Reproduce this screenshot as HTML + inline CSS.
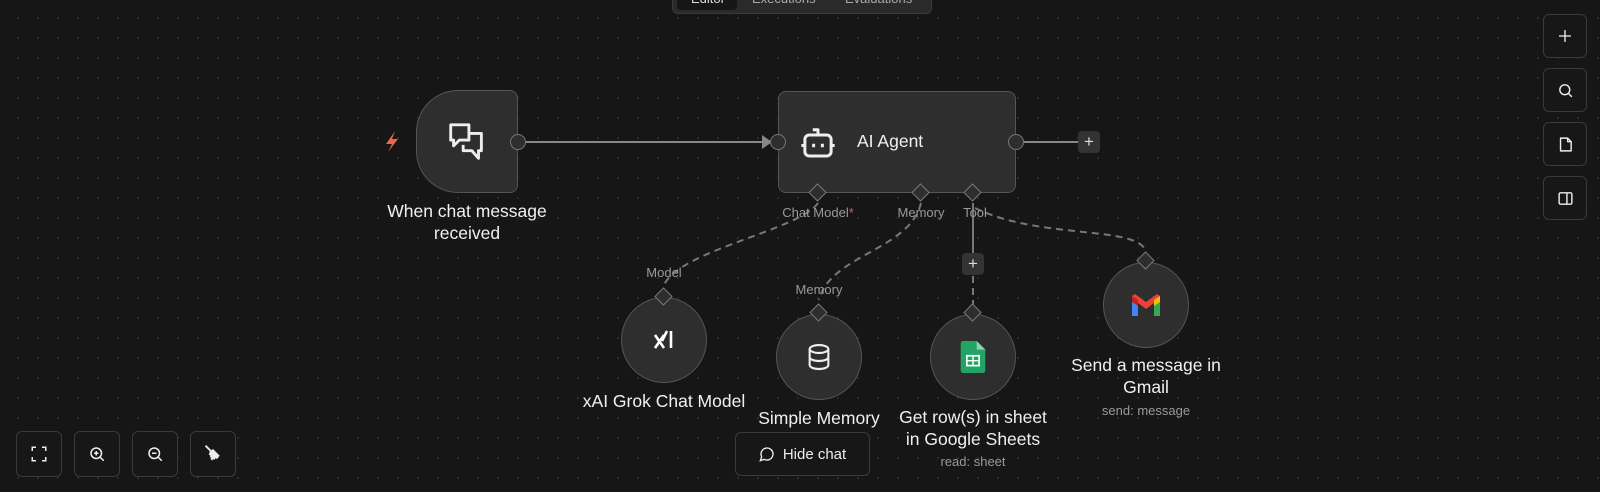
<!DOCTYPE html>
<html><head><meta charset="utf-8"><style>
*{margin:0;padding:0;box-sizing:border-box}
body{width:1600px;height:492px;overflow:hidden;background:#161616;font-family:"Liberation Sans",sans-serif;color:#eee;position:relative;
background-image:radial-gradient(circle,#2e2e2e 1px,transparent 1.2px);background-size:20px 20px;background-position:8px 8px}
.a{position:absolute}
.btn{position:absolute;width:46px;height:46px;border:1px solid #3a3a3a;border-radius:6px;background:#171717;display:flex;align-items:center;justify-content:center}
.rb{width:44px;height:44px}
.lbl{position:absolute;transform:translateX(-50%);white-space:nowrap;text-align:center}
.t{font-size:17.5px;line-height:22px;color:#f0f0f0}
.s{font-size:13px;color:#9a9a9a}
.circ{position:absolute;width:86px;height:86px;border-radius:50%;background:#2e2e2e;border:1.5px solid #555;display:flex;align-items:center;justify-content:center}
</style></head><body>
<div class="a" style="left:672px;top:-12px;width:260px;height:26px;background:#2a2a2a;border-radius:6px;border:1px solid #3a3a3a"></div>
<div class="a" style="left:677px;top:-10px;width:60px;height:20px;background:#161616;border-radius:4px"></div>
<div class="a" style="left:691px;top:-9px;font-size:13px;color:#ddd">Editor</div>
<div class="a" style="left:752px;top:-9px;font-size:13px;color:#aaa">Executions</div>
<div class="a" style="left:845px;top:-9px;font-size:13px;color:#aaa">Evaluations</div>

<svg class="a" style="left:0;top:0" width="1600" height="492">
<g fill="none" stroke="#777" stroke-width="2">
<line x1="526" y1="142" x2="768" y2="142" stroke="#888"/>
<line x1="1024" y1="142" x2="1078" y2="142" stroke="#888"/>
<path d="M818 203 C 800 230, 680 250, 664 285" stroke-dasharray="7 5"/>
<path d="M921 203 C 910 250, 830 255, 819 300" stroke-dasharray="7 5"/>
<line x1="973" y1="203" x2="973" y2="253"/>
<line x1="973" y1="276" x2="973" y2="305" stroke-dasharray="7 5"/>
<path d="M975 208 C 1040 240, 1140 225, 1146 252" stroke-dasharray="7 5"/>
</g>
<path d="M762 135 L772 142 L762 149Z" fill="#888"/>
<path d="M395 131 L386 144 L392 144 L388 152 L398 139 L392 139Z" fill="#e9664a"/>
</svg>

<div class="a" style="left:416px;top:90px;width:102px;height:103px;background:#2e2e2e;border:1.5px solid #555;border-radius:42px 8px 8px 42px;display:flex;align-items:center;justify-content:center">
<svg width="46" height="46" viewBox="0 0 24 24" fill="none" stroke="#eee" stroke-width="1.5" stroke-linejoin="round"><path d="M3.5 3h9.5v8H8l-3 3v-3H3.5z"/><path d="M13 7.5h6.5v9h-1.5v4l-3.5-4h-4.5v-3"/></svg></div>
<div class="a" style="left:510px;top:134px;width:16px;height:16px;border-radius:50%;background:#2e2e2e;border:1.5px solid #777"></div>
<div class="lbl t" style="left:467px;top:200px">When chat message<br>received</div>

<div class="a" style="left:778px;top:91px;width:238px;height:102px;background:#2e2e2e;border:1.5px solid #555;border-radius:8px"></div>
<svg class="a" style="left:797px;top:121px" width="42" height="42" viewBox="0 0 24 24" fill="none" stroke="#eee" stroke-width="1.7" stroke-linejoin="round"><rect x="4.5" y="8" width="15" height="12" rx="2.5"/><path d="M12 8V5h-3"/><path d="M2.5 14h2M19.5 14h2M9.5 13v2M14.5 13v2"/></svg>
<div class="a" style="left:857px;top:131px;font-size:17.5px;color:#f0f0f0">AI Agent</div>
<div class="a" style="left:770px;top:134px;width:16px;height:16px;border-radius:50%;background:#2e2e2e;border:1.5px solid #777"></div>
<div class="a" style="left:1008px;top:134px;width:16px;height:16px;border-radius:50%;background:#2e2e2e;border:1.5px solid #777"></div>
<div class="a" style="left:1078px;top:131px;width:22px;height:22px;border-radius:4px;background:#333;color:#ddd;font-size:17px;line-height:22px;text-align:center">+</div>

<div class="a" style="left:811px;top:186px;width:13px;height:13px;transform:rotate(45deg);background:#2e2e2e;border:1.5px solid #777"></div>
<div class="a" style="left:914px;top:186px;width:13px;height:13px;transform:rotate(45deg);background:#2e2e2e;border:1.5px solid #777"></div>
<div class="a" style="left:966px;top:186px;width:13px;height:13px;transform:rotate(45deg);background:#2e2e2e;border:1.5px solid #777"></div>
<div class="lbl s" style="left:818px;top:205px">Chat Model<span style="color:#e55">*</span></div>
<div class="lbl s" style="left:921px;top:205px">Memory</div>
<div class="lbl s" style="left:975px;top:205px">Tool</div>

<div class="circ" style="left:621px;top:297px"><svg width="24" height="24" viewBox="0 0 24 24" stroke="#fff" stroke-width="2.6" fill="none"><path d="M3 7l9 13M12 7l-9 13M15 3l-5 10M19 3v17"/></svg></div>
<div class="circ" style="left:776px;top:314px"><svg width="32" height="32" viewBox="0 0 24 24" fill="none" stroke="#eee" stroke-width="1.6"><ellipse cx="12" cy="6" rx="7" ry="3"/><path d="M5 6v12c0 1.7 3 3 7 3s7-1.3 7-3V6M5 12c0 1.7 3 3 7 3s7-1.3 7-3"/></svg></div>
<div class="circ" style="left:930px;top:314px"><svg width="26" height="32" viewBox="0 0 20 26"><path d="M2 0h11l7 7v17a2 2 0 0 1-2 2H2a2 2 0 0 1-2-2V2a2 2 0 0 1 2-2z" fill="#21a464"/><path d="M13 0v7h7z" fill="#8ed1b1"/><rect x="5" y="12" width="10" height="8" fill="none" stroke="#fff" stroke-width="1.4"/><path d="M5 16h10M10 12v8" stroke="#fff" stroke-width="1.2"/></svg></div>
<div class="circ" style="left:1103px;top:262px"><svg width="32" height="26" viewBox="0 0 32 26"><path d="M2 4v20h6V11l8 6 8-6v13h6V4l-3-2-11 8L5 2z" fill="#ea4335"/><path d="M2 4v20h6V10z" fill="#4285f4"/><path d="M24 10v14h6V4z" fill="#34a853"/><path d="M30 4v6l-6 4V8z" fill="#fbbc04"/><path d="M2 4v6l6 4V8z" fill="#c5221f"/></svg></div>

<div class="a" style="left:657px;top:290px;width:13px;height:13px;transform:rotate(45deg);background:#2e2e2e;border:1.5px solid #777"></div>
<div class="a" style="left:812px;top:306px;width:13px;height:13px;transform:rotate(45deg);background:#2e2e2e;border:1.5px solid #777"></div>
<div class="a" style="left:966px;top:306px;width:13px;height:13px;transform:rotate(45deg);background:#2e2e2e;border:1.5px solid #777"></div>
<div class="a" style="left:1139px;top:254px;width:13px;height:13px;transform:rotate(45deg);background:#2e2e2e;border:1.5px solid #777"></div>
<div class="a" style="left:962px;top:253px;width:22px;height:22px;border-radius:4px;background:#333;color:#ddd;font-size:17px;line-height:22px;text-align:center">+</div>

<div class="lbl s" style="left:664px;top:265px">Model</div>
<div class="lbl s" style="left:819px;top:282px">Memory</div>
<div class="lbl t" style="left:664px;top:390px">xAI Grok Chat Model</div>
<div class="lbl t" style="left:819px;top:407px">Simple Memory</div>
<div class="lbl t" style="left:973px;top:406px">Get row(s) in sheet<br>in Google Sheets</div>
<div class="lbl s" style="left:973px;top:454px">read: sheet</div>
<div class="lbl t" style="left:1146px;top:354px">Send a message in<br>Gmail</div>
<div class="lbl s" style="left:1146px;top:403px">send: message</div>

<div class="a" style="left:735px;top:432px;width:135px;height:44px;border:1px solid #3a3a3a;border-radius:6px;background:#171717;display:flex;align-items:center;justify-content:center;gap:8px;font-size:15px;color:#eee">
<svg width="16" height="16" viewBox="0 0 24 24" fill="none" stroke="#eee" stroke-width="2"><path d="M7.9 20A9 9 0 1 0 4 16.1L2 22z"/></svg>Hide chat</div>

<div class="btn" style="left:16px;top:431px"><svg width="18" height="18" viewBox="0 0 24 24" fill="none" stroke="#eee" stroke-width="2"><path d="M3 8V3h5M16 3h5v5M21 16v5h-5M8 21H3v-5"/></svg></div>
<div class="btn" style="left:74px;top:431px"><svg width="18" height="18" viewBox="0 0 24 24" fill="none" stroke="#eee" stroke-width="2"><circle cx="11" cy="11" r="7"/><path d="M21 21l-5-5M11 8v6M8 11h6"/></svg></div>
<div class="btn" style="left:132px;top:431px"><svg width="18" height="18" viewBox="0 0 24 24" fill="none" stroke="#eee" stroke-width="2"><circle cx="11" cy="11" r="7"/><path d="M21 21l-5-5M8 11h6"/></svg></div>
<div class="btn" style="left:190px;top:431px"><svg width="20" height="20" viewBox="0 0 24 24" fill="#eee"><path d="M3 2l7 7" stroke="#eee" stroke-width="2.2"/><path d="M8 9l4-3 8 8-3 4-2-1-1 2-2-1-1 2-2-2 1-2-2 0 1-2-2-1z"/></svg></div>

<div class="btn rb" style="left:1543px;top:14px"><svg width="16" height="16" viewBox="0 0 24 24" stroke="#eee" stroke-width="2"><path d="M12 3v18M3 12h18"/></svg></div>
<div class="btn rb" style="left:1543px;top:68px"><svg width="17" height="17" viewBox="0 0 24 24" fill="none" stroke="#eee" stroke-width="2"><circle cx="11" cy="11" r="7"/><path d="M21 21l-5-5"/></svg></div>
<div class="btn rb" style="left:1543px;top:122px"><svg width="17" height="17" viewBox="0 0 24 24" fill="none" stroke="#eee" stroke-width="2" stroke-linejoin="round"><path d="M5 3h10l5 5v13H5z"/><path d="M15 3v5h5"/></svg></div>
<div class="btn rb" style="left:1543px;top:176px"><svg width="17" height="17" viewBox="0 0 24 24" fill="none" stroke="#eee" stroke-width="2"><rect x="3" y="4" width="18" height="16" rx="2"/><path d="M14 4v16"/></svg></div>
</body></html>
